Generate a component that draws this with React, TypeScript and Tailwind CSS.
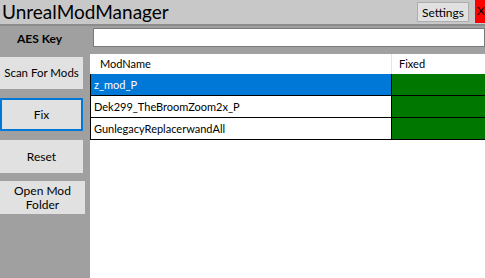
import React from 'react';

const mods = [
  { name: 'z_mod_P', selected: true },
  { name: 'Dek299_TheBroomZoom2x_P', selected: false },
  { name: 'GunlegacyReplacerwandAll', selected: false },
];

export default function App() {
  return (
    <div className="w-[485px] h-[278px] overflow-hidden flex flex-col bg-[#a0a0a0] font-['Lato',sans-serif] text-[11px] text-black">
      {/* title bar */}
      <div className="h-[26px] shrink-0 flex items-start bg-[#c8c8c8] border-b-2 border-[#8c8c8c]">
        <div className="pl-[2px] text-[19px] leading-[23px]">UnrealModManager</div>
        <div className="flex-1" />
        <button className="mt-[2px] h-[20px] px-[4px] bg-[#e1e1e1] border border-[#adadad] text-[12px] leading-[17px]">
          Settings
        </button>
        <div className="ml-[6px] w-[10px] h-[23px] bg-[#ff0000] text-[12px] leading-[22px] pl-[2px] overflow-hidden">
          X
        </div>
      </div>

      {/* AES key row */}
      <div className="h-[28px] shrink-0 flex items-start">
        <div className="w-[93px] pt-[5px] pl-[17px] font-bold text-[12px] leading-[16px]">AES Key</div>
        <input className="flex-1 mt-[2px] h-[19px] bg-white border border-[#7a7a7a] outline-none" />
      </div>

      <div className="flex flex-1 min-h-0">
        {/* sidebar */}
        <div className="w-[90px] shrink-0 flex flex-col pt-[3px] text-[12px]">
          <button className="w-[83px] h-[32px] bg-[#e1e1e1] text-[11.5px]">Scan For Mods</button>
          <button className="mt-[9px] w-[83px] h-[33px] bg-[#e1e1e1] border-2 border-[#0078d7]">Fix</button>
          <button className="mt-[9px] w-[83px] h-[33px] bg-[#e1e1e1]">Reset</button>
          <button className="mt-[8px] w-[85px] h-[33px] bg-[#e1e1e1] leading-[14px]">
            Open Mod
            <br />
            Folder
          </button>
        </div>

        {/* mod table */}
        <div className="flex-1 bg-white">
          <div className="flex h-[20px]">
            <div className="w-[301px] pl-[10px] leading-[20px]">ModName</div>
            <div className="flex-1 border-l border-[#e5e5e5] pl-[7px] leading-[20px]">Fixed</div>
          </div>
          {mods.map((m) => (
            <div key={m.name} className="flex h-[22px] border-l border-b border-black">
              <div
                className={
                  m.selected
                    ? 'w-[300px] pl-[3px] leading-[21px] bg-[#0078d7] text-white'
                    : 'w-[300px] pl-[3px] leading-[21px]'
                }
              >
                {m.name}
              </div>
              <div className="flex-1 border-l border-black bg-[#007800]" />
            </div>
          ))}
        </div>
      </div>
    </div>
  );
}
